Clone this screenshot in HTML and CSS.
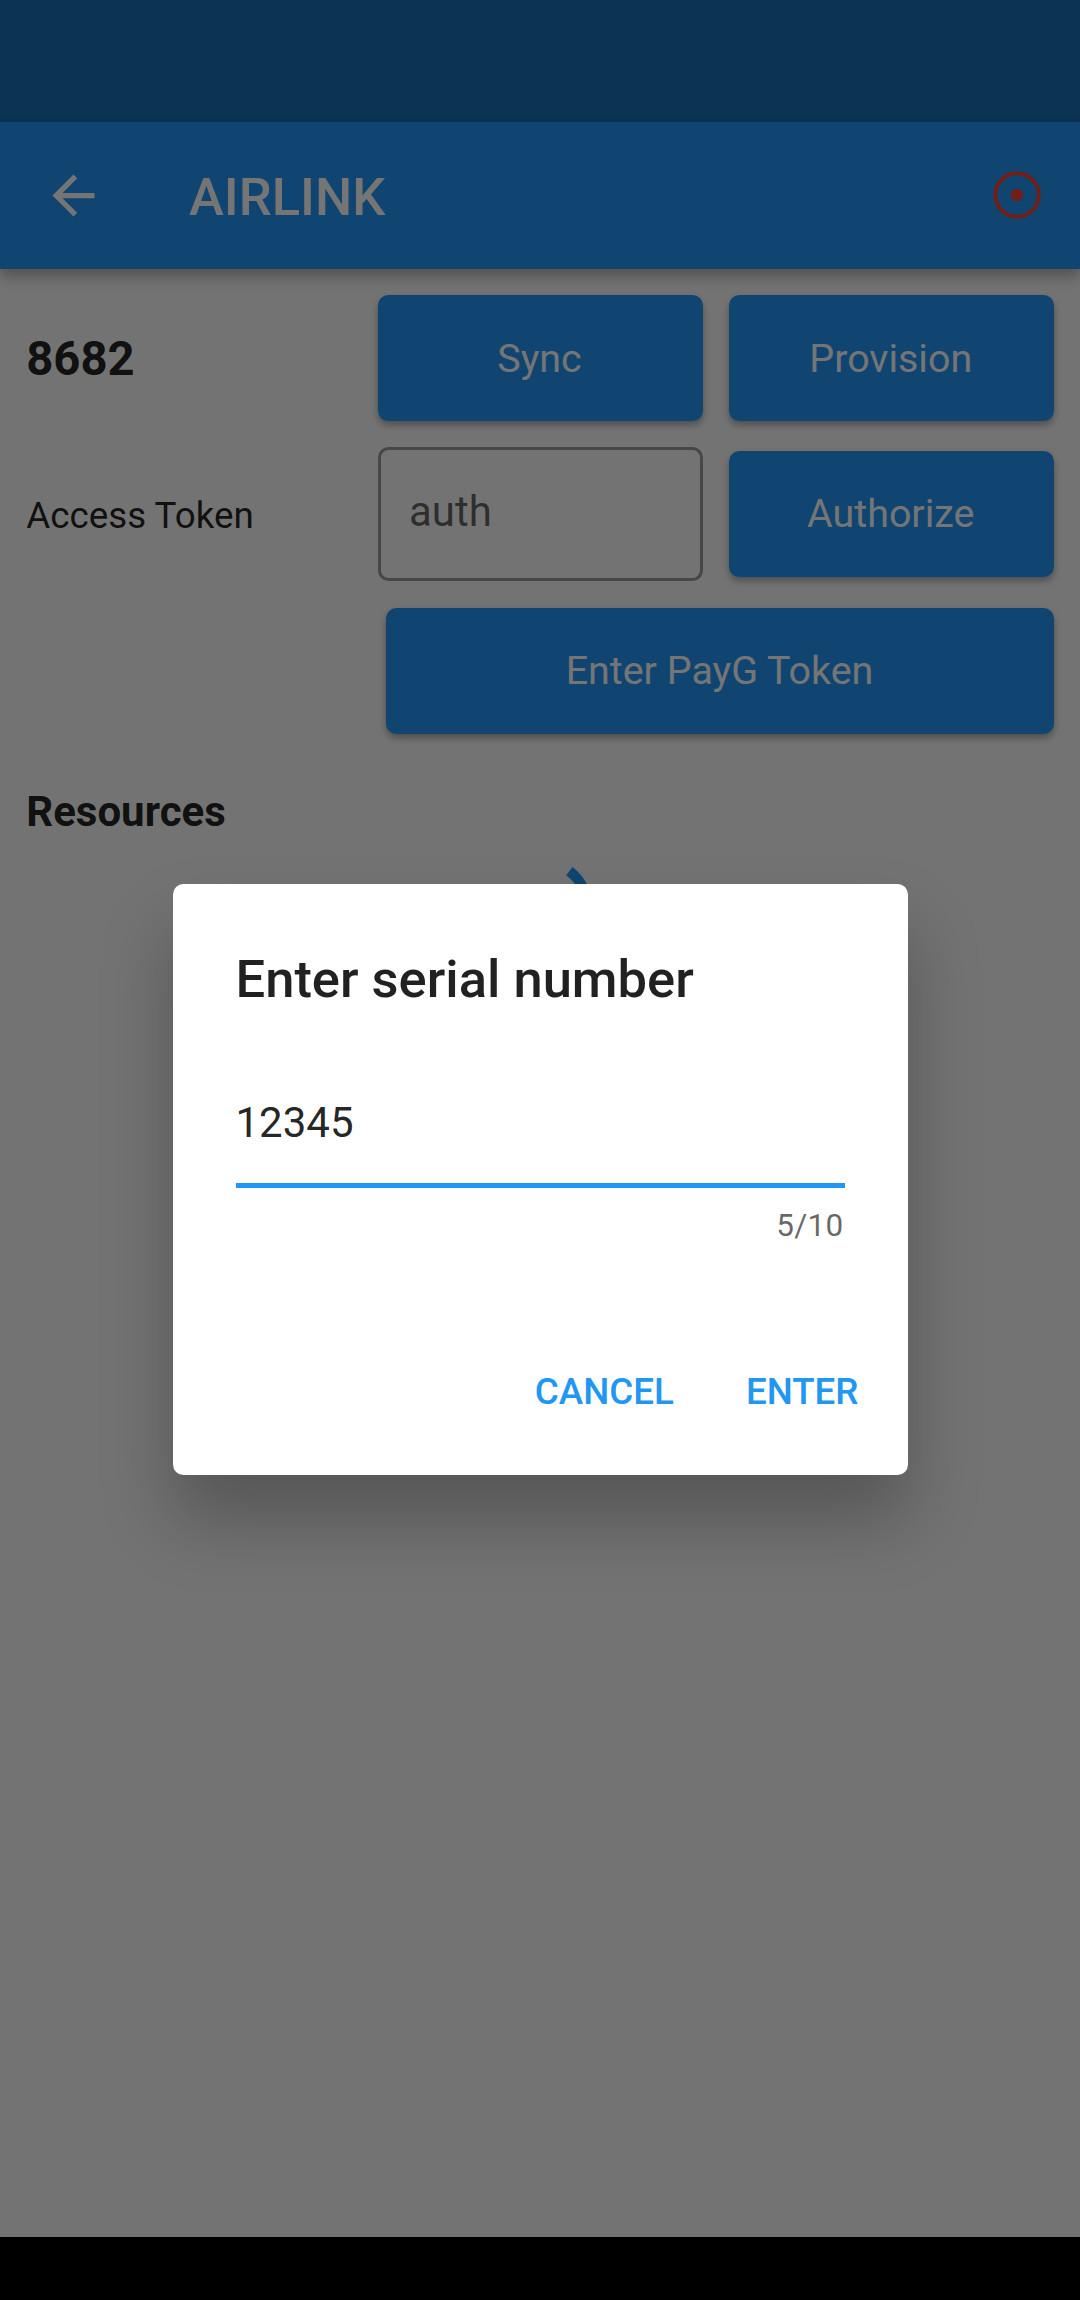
FILE: index.html
```html
<!DOCTYPE html>
<html lang="en">
<head>
<meta charset="utf-8">
<title>Airlink</title>
<link rel="stylesheet" href="styles.css">
</head>
<body>
<div class="screen">
  <div class="status-bar"></div>
  <header class="app-bar">
    <svg class="back-icon" viewBox="0 0 24 24"><path d="M20 11H7.83l5.59-5.59L12 4l-8 8 8 8 1.41-1.41L7.83 13H20v-2z"/></svg>
    <h1 class="app-title">AIRLINK</h1>
    <svg class="status-icon" viewBox="0 0 48 48"><circle class="ring" cx="24" cy="24" r="21.7"/><circle class="dot" cx="24" cy="24" r="6.2"/></svg>
  </header>
  <main class="content">
    <div class="row">
      <div class="device-id">8682</div>
      <button class="button">Sync</button>
      <button class="button">Provision</button>
    </div>
    <div class="row token-row">
      <div class="label">Access Token</div>
      <div class="field">auth</div>
      <button class="button">Authorize</button>
    </div>
    <div class="row split">
      <div></div>
      <button class="button">Enter PayG Token</button>
    </div>
    <h2 class="section-title">Resources</h2>
    <svg class="spinner" viewBox="0 0 105 105"><path d="M81.3 15.1A47.25 47.25 0 0 1 99.75 52.5"/></svg>
  </main>
  <div class="nav-bar"></div>
  <div class="scrim">
    <section class="dialog" role="dialog">
      <h2 class="dialog-title">Enter serial number</h2>
      <div class="serial-input">12345</div>
      <div class="counter">5/10</div>
      <div class="actions">
        <button class="action">CANCEL</button>
        <button class="action">ENTER</button>
      </div>
    </section>
  </div>
</div>
</body>
</html>
```
FILE: styles.css
```css
* {
  box-sizing: border-box;
}

body {
  margin: 0;
  font-family: Roboto, sans-serif;
  color: rgba(0, 0, 0, 0.87);
}

h1,
h2 {
  margin: 0;
}

button {
  border: 0;
  padding: 0;
  font-family: inherit;
}

.screen {
  position: relative;
  display: flex;
  flex-direction: column;
  width: 1080px;
  height: 2300px;
  overflow: hidden;
  background: #fafafa;
}

.status-bar {
  height: 122px;
  background: #196fb4;
}

.app-bar {
  display: flex;
  align-items: center;
  height: 147px;
  padding: 0 39px 0 42px;
  background: #2196f3;
  box-shadow: 0 8px 12px rgba(0, 0, 0, 0.27);
}

.back-icon {
  width: 63px;
  height: 63px;
  fill: #fff;
}

.app-title {
  flex: 1;
  padding: 2px 0 0 84px;
  font-size: 52.5px;
  font-weight: 500;
  line-height: 62px;
  color: #fff;
}

.status-icon {
  width: 48px;
  height: 48px;
  margin-bottom: 1px;
}

.ring {
  fill: none;
  stroke: #f44336;
  stroke-width: 4;
}

.dot {
  fill: #f44336;
}

.content {
  display: flex;
  flex: 1;
  flex-direction: column;
  gap: 26.25px;
  padding: 26.25px;
}

.row {
  display: grid;
  grid-template-columns: repeat(3, 1fr);
  align-items: center;
  gap: 26.25px;
}

.token-row {
  margin: -1px 0 1px;
}

.row.split {
  grid-template-columns: 1fr 2fr;
}

.device-id {
  padding-top: 2px;
  font-size: 47.25px;
  font-weight: 700;
}

.label {
  padding-top: 3px;
  font-size: 36.75px;
}

.button {
  height: 126px;
  padding-right: 1px;
  border-radius: 10.5px;
  background: #2196f3;
  box-shadow: 0 4px 7px rgba(0, 0, 0, 0.32);
  font-size: 39.4px;
  color: #fff;
}

.field {
  height: 134px;
  padding: 37px 28.5px 0;
  border: 3px solid rgba(0, 0, 0, 0.38);
  border-radius: 10.5px;
  font-size: 42px;
  line-height: 50px;
  color: rgba(0, 0, 0, 0.6);
}

.section-title {
  padding-top: 27px;
  font-size: 42px;
  font-weight: 700;
  line-height: 50px;
}

.spinner {
  align-self: center;
  width: 105px;
  height: 105px;
  margin-top: -7px;
  fill: none;
  stroke: #2196f3;
  stroke-width: 10.5;
}

.nav-bar {
  height: 63px;
  background: #000;
}

/* Modal layer covering the whole screen */
.scrim {
  position: absolute;
  inset: 0;
  display: flex;
  align-items: center;
  justify-content: center;
  padding: 122px 0 63px;
  background: rgba(0, 0, 0, 0.54);
}

.dialog {
  display: flex;
  flex-direction: column;
  width: 735px;
  height: 590.6px;
  padding: 64px 21px 0 63px;
  border-radius: 10.5px;
  background: #fff;
  box-shadow: 0 45px 70px rgba(0, 0, 0, 0.25);
}

.dialog-title {
  font-size: 52.5px;
  font-weight: 500;
  line-height: 62px;
}

.serial-input {
  height: 116px;
  margin: 62px 42px 0 0;
  padding-top: 26px;
  border-bottom: 5px solid #2196f3;
  font-size: 42px;
  line-height: 50px;
}

.counter {
  margin: 19px 43px 0 0;
  font-size: 31.5px;
  line-height: 38px;
  letter-spacing: 0.3px;
  text-align: right;
  color: rgba(0, 0, 0, 0.6);
}

.actions {
  display: flex;
  justify-content: flex-end;
  gap: 21px;
  margin-top: 99px;
}

.action {
  height: 94.5px;
  padding: 0 26.5px;
  background: none;
  font-size: 36.75px;
  font-weight: 500;
  color: #2196f3;
}

.action + .action {
  padding: 0 28px 0 24.5px;
}
```
